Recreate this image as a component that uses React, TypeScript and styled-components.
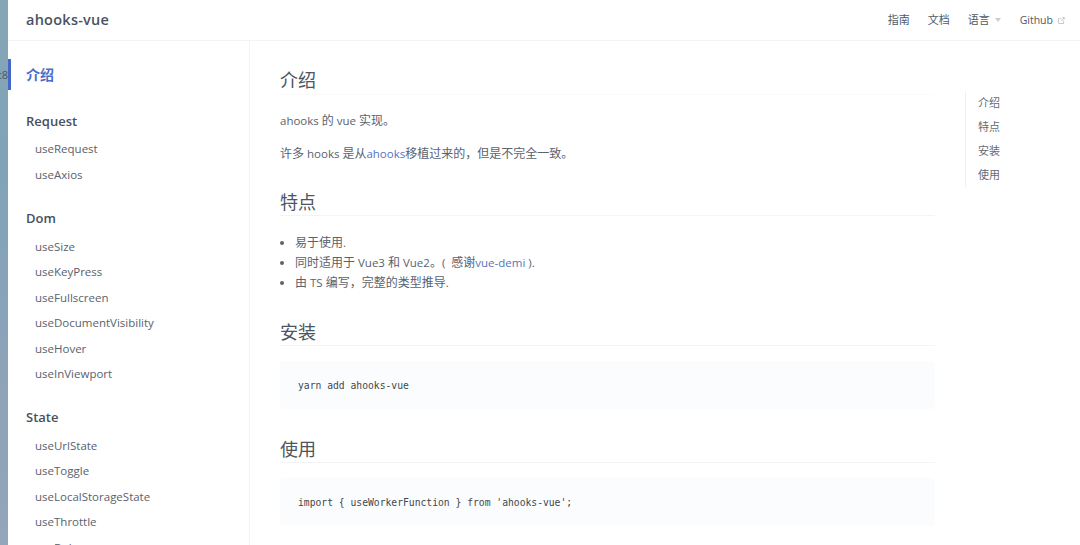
import React from "react";
import styled, { createGlobalStyle } from "styled-components";

const Global = createGlobalStyle`
  html, body { margin: 0; padding: 0; height: 545px; overflow: hidden; background: #fff; }
  body { font-family: "Open Sans", "Noto Sans CJK SC", sans-serif; color: #2c3e50; }
  #root { height: 545px; }
`;

const FONT = `"Open Sans", "Noto Sans CJK SC", sans-serif`;

const Shell = styled.div`
  display: flex;
  width: 1080px;
  height: 545px;
  overflow: hidden;
`;
const Strip = styled.div`
  width: 8px;
  flex: none;
  background: linear-gradient(180deg, #86a6b6 0%, #80a3b8 30%, #8ea3b8 70%, #93a6bb 100%);
  display: flex;
  justify-content: flex-end;
  padding-top: 68px;
  overflow: hidden;
  font: 11px/14px ${FONT};
  color: #4a5862;
`;
const Page = styled.div`
  flex: 1;
  min-width: 0;
  display: flex;
  flex-direction: column;
`;
const Navbar = styled.header`
  height: 40px;
  flex: none;
  border-bottom: 1px solid #f2f3f5;
  display: flex;
  align-items: center;
  justify-content: space-between;
  padding: 0 14px 0 18px;
`;
const Brand = styled.div`
  font: 600 14.5px/20px ${FONT};
  color: #4a5361;
  letter-spacing: 0.25px;
`;
const NavLinks = styled.nav`
  display: flex;
  align-items: center;
  gap: 18px;
  font: 400 11px/16px ${FONT};
  color: #505a66;
`;
const NavItem = styled.span`
  display: inline-flex;
  align-items: center;
`;
const GithubLabel = styled.span`
  font-size: 10.5px;
  font-weight: 500;
  margin-left: 1px;
`;
const Caret = styled.span`
  width: 0;
  height: 0;
  margin-left: 5px;
  border-left: 3px solid transparent;
  border-right: 3px solid transparent;
  border-top: 4px solid #c9cdd1;
`;
const ExternalIcon = styled.svg`
  width: 9px;
  height: 9px;
  margin-left: 4px;
  color: #b5b9be;
`;
const Body = styled.div`
  flex: 1;
  min-height: 0;
  display: flex;
`;
const Sidebar = styled.aside`
  width: 241px;
  flex: none;
  border-right: 1px solid #f2f3f5;
  padding-top: 18px;
  overflow: hidden;
`;
const ActiveLink = styled.div`
  height: 31px;
  border-left: 3px solid #4467c8;
  padding-left: 15px;
  font: 600 14px/31px ${FONT};
  color: #4a6cca;
`;
const GroupTitle = styled.div`
  font: 600 13px/18px ${FONT};
  color: #47505d;
  padding-left: 18px;
  margin-top: 21.5px;
`;
const SideList = styled.ul`
  list-style: none;
  margin: 6.8px 0 0;
  padding: 0 0 0 27px;
`;
const SideItem = styled.li`
  font: 400 11.5px/25.5px ${FONT};
  color: #59626e;
  white-space: nowrap;
`;
const Main = styled.main`
  flex: 1;
  min-width: 0;
  display: flex;
  overflow: hidden;
`;
const Article = styled.article`
  width: 655px;
  flex: none;
  margin-left: 30px;
  padding-top: 27px;
`;
const H1 = styled.h1`
  margin: 0;
  height: 26px;
  font: 400 18px/24px ${FONT};
  color: #4d5560;
  border-bottom: 1px solid #fbfbfc;
`;
const H2 = styled.h2<{ $top: number }>`
  margin: ${(p) => p.$top}px 0 0;
  font: 400 18px/24px ${FONT};
  color: #4d5560;
  border-bottom: 1px solid #f3f4f5;
  padding-bottom: 1px;
`;
const Para = styled.p<{ $top: number }>`
  margin: ${(p) => p.$top}px 0 0;
  font: 400 11.5px/20px ${FONT};
  color: #59626e;
`;
const Zh = styled.span`
  font-size: 12px;
`;
const Link = styled.span`
  color: #5872c0;
`;
const List = styled.ul`
  margin: 17px 0 0;
  padding: 0 0 0 15px;
  font: 400 11.5px/20px ${FONT};
  color: #59626e;
`;
const CodeBlock = styled.pre`
  margin: 15px 0 0;
  height: 48px;
  padding: 0 18px;
  background: #fbfcfd;
  border-radius: 4px;
  font: 400 9.7px/49px "DejaVu Sans Mono", monospace;
  color: #3f4750;
`;
const Toc = styled.aside`
  margin: 50px 0 0 30px;
  height: 96px;
  border-left: 1px solid #eef0f1;
  padding-left: 12px;
`;
const TocItem = styled.div`
  font: 400 11px/24px ${FONT};
  color: #626b76;
`;

const groups = [
  { title: "Request", items: ["useRequest", "useAxios"] },
  { title: "Dom", items: ["useSize", "useKeyPress", "useFullscreen", "useDocumentVisibility", "useHover", "useInViewport"] },
  { title: "State", items: ["useUrlState", "useToggle", "useLocalStorageState", "useThrottle", "useDebounce"] },
];

export default function App() {
  return (
    <Shell>
      <Global />
      <Strip>ut8</Strip>
      <Page>
        <Navbar>
          <Brand>ahooks-vue</Brand>
          <NavLinks>
            <NavItem>指南</NavItem>
            <NavItem>文档</NavItem>
            <NavItem>语言<Caret /></NavItem>
            <NavItem>
              <GithubLabel>Github</GithubLabel>
              <ExternalIcon viewBox="0 0 100 100" fill="currentColor">
                <path d="M18.8 85.1h56c2.2 0 4-1.8 4-4v-32h-8v28h-48v-48h28v-8h-32c-2.2 0-4 1.8-4 4v56c0 2.2 1.8 4 4 4z" />
                <polygon points="45.7,48.7 51.3,54.3 77.2,28.5 77.2,37.2 85.2,37.2 85.2,14.9 62.8,14.9 62.8,22.9 71.5,22.9" />
              </ExternalIcon>
            </NavItem>
          </NavLinks>
        </Navbar>
        <Body>
          <Sidebar>
            <ActiveLink>介绍</ActiveLink>
            {groups.map((g) => (
              <React.Fragment key={g.title}>
                <GroupTitle>{g.title}</GroupTitle>
                <SideList>
                  {g.items.map((i) => (
                    <SideItem key={i}>{i}</SideItem>
                  ))}
                </SideList>
              </React.Fragment>
            ))}
          </Sidebar>
          <Main>
            <Article>
              <H1>介绍</H1>
              <Para $top={16}>ahooks <Zh>的</Zh> vue <Zh>实现。</Zh></Para>
              <Para $top={13}><Zh>许多</Zh> hooks <Zh>是从</Zh><Link>ahooks</Link><Zh>移植过来的，但是不完全一致。</Zh></Para>
              <H2 $top={26}>特点</H2>
              <List>
                <li><Zh>易于使用</Zh>.</li>
                <li><Zh>同时适用于</Zh> Vue3 <Zh>和</Zh> Vue2<Zh>。</Zh>(&nbsp; <Zh>感谢</Zh><Link>vue-demi</Link> ).</li>
                <li><Zh>由</Zh> TS <Zh>编写，完整的类型推导</Zh>.</li>
              </List>
              <H2 $top={27}>安装</H2>
              <CodeBlock>yarn add ahooks-vue</CodeBlock>
              <H2 $top={28}>使用</H2>
              <CodeBlock>{"import { useWorkerFunction } from 'ahooks-vue';"}</CodeBlock>
            </Article>
            <Toc>
              <TocItem>介绍</TocItem>
              <TocItem>特点</TocItem>
              <TocItem>安装</TocItem>
              <TocItem>使用</TocItem>
            </Toc>
          </Main>
        </Body>
      </Page>
    </Shell>
  );
}
